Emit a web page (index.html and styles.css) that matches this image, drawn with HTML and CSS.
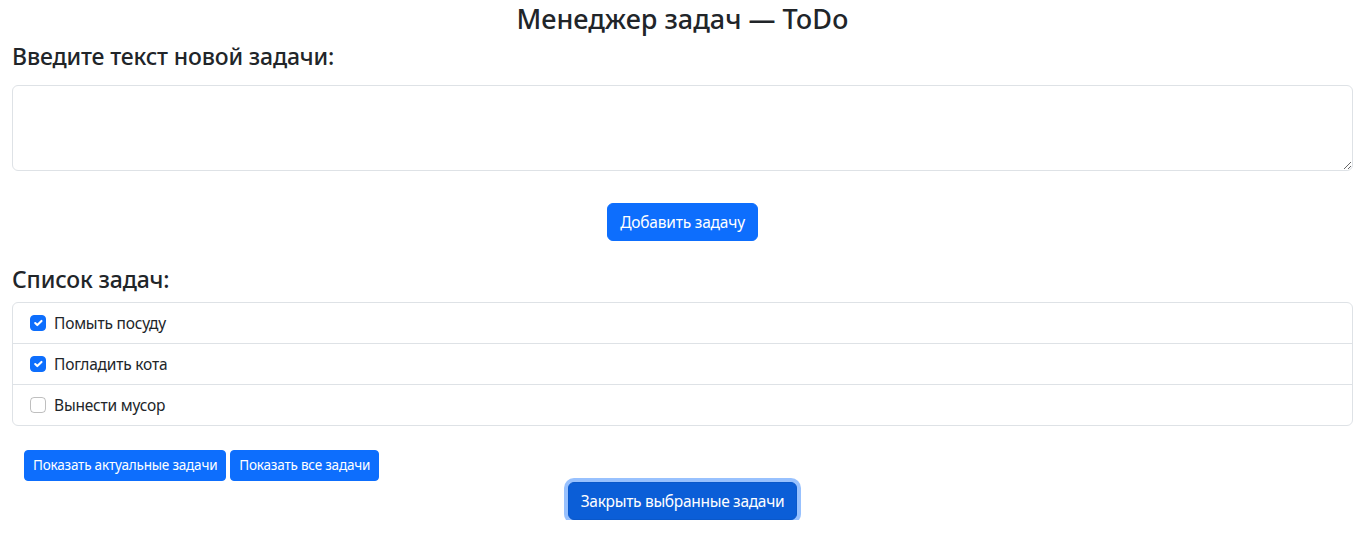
FILE: index.html
```html
<!DOCTYPE html>
<html lang="ru">
<head>
<meta charset="utf-8">
<title>Менеджер задач — ToDo</title>
<link rel="stylesheet" href="styles.css">
</head>
<body>
<div class="container">
  <h3 class="title">Менеджер задач — ToDo</h3>
  <h4 class="heading">Введите текст новой задачи:</h4>
  <textarea class="input" rows="3"></textarea>
  <div class="center add-row">
    <button class="btn">Добавить задачу</button>
  </div>
  <h4 class="heading">Список задач:</h4>
  <ul class="list">
    <li class="item"><span class="check checked"><svg viewBox="0 0 20 20" width="16" height="16"><path fill="none" stroke="#fff" stroke-linecap="round" stroke-linejoin="round" stroke-width="3" d="m6 10 3 3 6-6"/></svg></span><span>Помыть посуду</span></li>
    <li class="item"><span class="check checked"><svg viewBox="0 0 20 20" width="16" height="16"><path fill="none" stroke="#fff" stroke-linecap="round" stroke-linejoin="round" stroke-width="3" d="m6 10 3 3 6-6"/></svg></span><span>Погладить кота</span></li>
    <li class="item"><span class="check"></span><span>Вынести мусор</span></li>
  </ul>
  <div class="filters">
    <button class="btn btn-sm">Показать актуальные задачи</button>
    <button class="btn btn-sm">Показать все задачи</button>
  </div>
  <div class="center">
    <button class="btn btn-focus">Закрыть выбранные задачи</button>
  </div>
</div>
</body>
</html>
```
FILE: styles.css
```css
* { box-sizing: border-box; }
body {
  margin: 0;
  font-family: "Noto Sans", "Open Sans", sans-serif;
  color: #212529;
  background: #fff;
  font-size: 16px;
  line-height: 1.5;
}
.container { padding: 0 12px; }
.title {
  margin: 0 0 4.6px;
  font-size: 27px;
  font-weight: 500;
  line-height: 37px;
  text-align: center;
}
.heading {
  margin: 0 0 8px;
  font-size: 23px;
  letter-spacing: -0.15px;
  font-weight: 500;
  line-height: 28.8px;
}
.input {
  display: block;
  width: 100%;
  height: 86px;
  margin-top: 15px;
  padding: 6px 12px;
  font: inherit;
  color: #212529;
  border: 1px solid #dee2e6;
  border-radius: 6px;
  resize: vertical;
}
.center { display: flex; justify-content: center; }
.add-row { margin: 32px 0 24px; }
.btn {
  font-family: inherit;
  font-size: 15.5px;
  letter-spacing: -0.2px;
  line-height: 24px;
  padding: 6px 12px;
  color: #fff;
  background: #0d6efd;
  border: 1px solid #0d6efd;
  border-radius: 6px;
}
.btn-sm {
  font-size: 13.5px;
  letter-spacing: -0.2px;
  line-height: 21px;
  padding: 4px 8px;
  border-radius: 4px;
}
.btn-focus {
  letter-spacing: -0.3px;
  background: #0b5ed7;
  border-color: #0a58ca;
  box-shadow: 0 0 0 4px rgba(49, 132, 253, 0.5);
}
.list {
  list-style: none;
  margin: 0;
  padding: 0;
  border: 1px solid #dee2e6;
  border-radius: 6px;
  font-size: 15.5px;
  letter-spacing: -0.2px;
}
.item {
  display: flex;
  align-items: center;
  padding: 8px 16px;
  line-height: 24px;
}
.item + .item { border-top: 1px solid #dee2e6; }
.check {
  width: 16px;
  height: 16px;
  margin: 0 8px 0 1px;
  border: 1px solid rgba(0, 0, 0, 0.25);
  border-radius: 4px;
  display: flex;
  align-items: center;
  justify-content: center;
  flex: none;
}
.check.checked {
  background: #0d6efd;
  border-color: #0d6efd;
}
.check svg { display: block; }
.filters {
  display: flex;
  gap: 4px;
  margin: 24px 0 1px 12px;
}
```
